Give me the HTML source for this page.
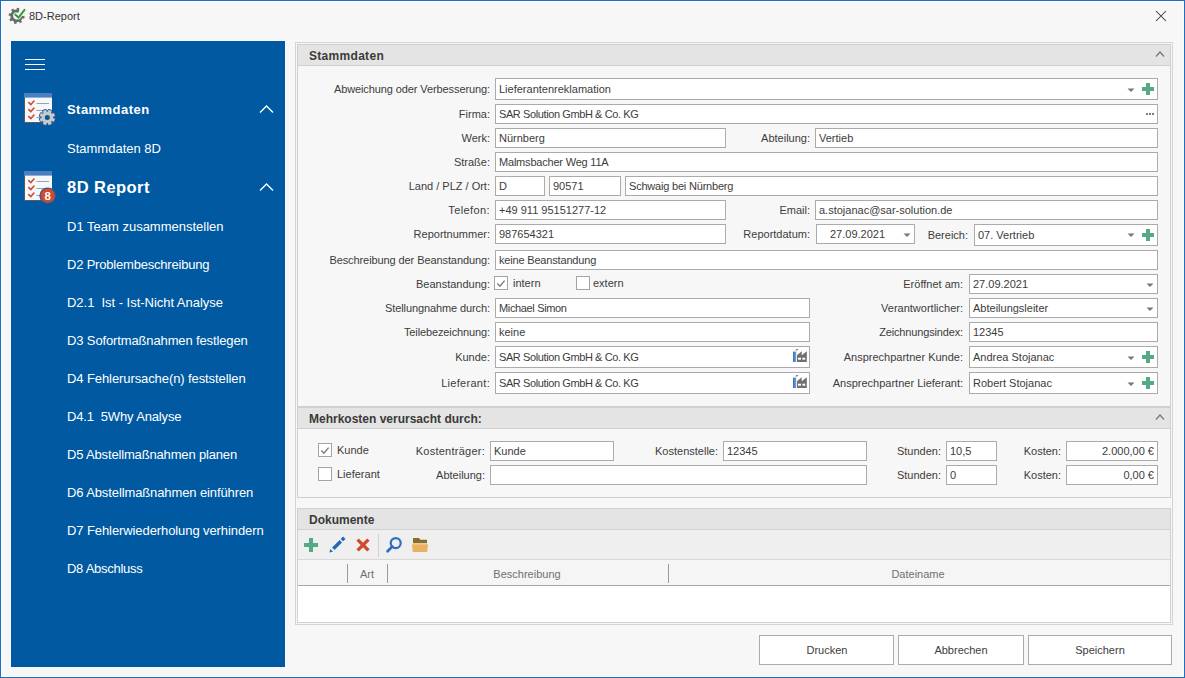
<!DOCTYPE html>
<html><head><meta charset="utf-8"><title>8D-Report</title>
<style>
html,body{margin:0;padding:0;width:1185px;height:678px;overflow:hidden;background:#f7f7f7;}
body{position:relative;font-family:"Liberation Sans", sans-serif;}
.t{position:absolute;white-space:nowrap;line-height:20px;height:20px;}
.b{position:absolute;box-sizing:border-box;}
.r{position:absolute;display:block;}
</style></head><body>
<div class="r" style="left:0;top:0;width:1183px;height:676px;border:1px solid #1a6fc4;background:#f7f7f7;"></div>
<div class="r" style="left:1px;top:1px;width:1183px;height:1px;background:#fdfdfd;"></div>
<div class="r" style="left:1px;top:1px;width:1px;height:676px;background:#fdfdfd;"></div>
<div class="r" style="left:1183px;top:1px;width:1px;height:676px;background:#fdfdfd;"></div>
<div class="r" style="left:1px;top:676px;width:1183px;height:1px;background:#fdfdfd;"></div>
<svg class="r" style="left:0px;top:0px;" width="30" height="30" viewBox="0 0 30 30">
<g transform="translate(16.6 15.9)" fill="#6a6a6a">
<circle r="4.9" fill="none" stroke="#6a6a6a" stroke-width="2.8" stroke-dasharray="24.4 6.4" transform="rotate(5)"/>
<rect x="-1.25" y="-8.0" width="2.5" height="3.4" transform="rotate(11)"/><rect x="-1.25" y="-8.0" width="2.5" height="3.4" transform="rotate(101)"/><rect x="-1.25" y="-8.0" width="2.5" height="3.4" transform="rotate(146)"/><rect x="-1.25" y="-8.0" width="2.5" height="3.4" transform="rotate(191)"/><rect x="-1.25" y="-8.0" width="2.5" height="3.4" transform="rotate(236)"/><rect x="-1.25" y="-8.0" width="2.5" height="3.4" transform="rotate(281)"/><rect x="-1.25" y="-8.0" width="2.5" height="3.4" transform="rotate(326)"/>
</g>
<path d="M15.2 14.5 L18.5 17.6 L24.5 9.8" fill="none" stroke="#f7f7f7" stroke-width="3.6" stroke-linecap="round" stroke-linejoin="round"/>
<path d="M15.2 14.5 L18.5 17.6 L24.5 9.8" fill="none" stroke="#2ba12e" stroke-width="2.0" stroke-linecap="round" stroke-linejoin="round"/>
</svg>
<div class="t" style="top:6px;font-size:11px;color:#333;left:29px;">8D-Report</div>
<svg class="r" style="left:1155px;top:10px;" width="12" height="12" viewBox="0 0 12 12"><path d="M1 1 L11 11 M11 1 L1 11" stroke="#3a3a3a" stroke-width="1.05"/></svg>
<div class="r" style="left:11px;top:41px;width:274px;height:626px;background:#0059a1;"></div>
<div class="r" style="left:25px;top:59px;width:20px;height:1px;background:#ffffff;"></div>
<div class="r" style="left:25px;top:64px;width:20px;height:1px;background:#ffffff;"></div>
<div class="r" style="left:25px;top:69px;width:20px;height:1px;background:#ffffff;"></div>
<svg class="r" style="left:24px;top:93px;" width="30" height="30" viewBox="0 0 30 30">
<rect x="0" y="0" width="28" height="30" fill="#5a5a5a"/>
<rect x="1" y="0" width="27" height="29" fill="#f6f7fa"/>
<rect x="0" y="0" width="28" height="4.6" fill="#4a80c0"/>
<g fill="none" stroke="#d14a2c" stroke-width="1.6" stroke-linecap="round" stroke-linejoin="round">
<path d="M4.8 9.6 L6.9 11.6 L10 8"/>
<path d="M4.8 16.6 L6.9 18.6 L10 15"/>
<path d="M4.8 23.6 L6.9 25.6 L10 22"/>
</g>
<g fill="#a0a0a0">
<rect x="12.5" y="10" width="12.5" height="1"/>
<rect x="12.5" y="17" width="12.5" height="1"/>
<rect x="12.5" y="24" width="12.5" height="1"/>
</g></svg>
<svg class="r" style="left:38px;top:108px;" width="19" height="19" viewBox="0 0 19 19">
<g transform="translate(9.3 9.4)">
<g fill="#1d5c9f"><circle r="6.6"/><rect x="-2.5" y="-8.5" width="5" height="4.6" rx="1.2" transform="rotate(22.5)"/><rect x="-2.5" y="-8.5" width="5" height="4.6" rx="1.2" transform="rotate(67.5)"/><rect x="-2.5" y="-8.5" width="5" height="4.6" rx="1.2" transform="rotate(112.5)"/><rect x="-2.5" y="-8.5" width="5" height="4.6" rx="1.2" transform="rotate(157.5)"/><rect x="-2.5" y="-8.5" width="5" height="4.6" rx="1.2" transform="rotate(202.5)"/><rect x="-2.5" y="-8.5" width="5" height="4.6" rx="1.2" transform="rotate(247.5)"/><rect x="-2.5" y="-8.5" width="5" height="4.6" rx="1.2" transform="rotate(292.5)"/><rect x="-2.5" y="-8.5" width="5" height="4.6" rx="1.2" transform="rotate(337.5)"/></g>
<g fill="#c9c9c9"><circle r="5.7"/><rect x="-1.7" y="-7.7" width="3.4" height="3.6" rx="0.8" transform="rotate(22.5)"/><rect x="-1.7" y="-7.7" width="3.4" height="3.6" rx="0.8" transform="rotate(67.5)"/><rect x="-1.7" y="-7.7" width="3.4" height="3.6" rx="0.8" transform="rotate(112.5)"/><rect x="-1.7" y="-7.7" width="3.4" height="3.6" rx="0.8" transform="rotate(157.5)"/><rect x="-1.7" y="-7.7" width="3.4" height="3.6" rx="0.8" transform="rotate(202.5)"/><rect x="-1.7" y="-7.7" width="3.4" height="3.6" rx="0.8" transform="rotate(247.5)"/><rect x="-1.7" y="-7.7" width="3.4" height="3.6" rx="0.8" transform="rotate(292.5)"/><rect x="-1.7" y="-7.7" width="3.4" height="3.6" rx="0.8" transform="rotate(337.5)"/></g>
<circle r="2.5" fill="#0059a1"/>
</g></svg>
<svg class="r" style="left:24px;top:171px;" width="30" height="30" viewBox="0 0 30 30">
<rect x="0" y="0" width="28" height="30" fill="#5a5a5a"/>
<rect x="1" y="0" width="27" height="29" fill="#f6f7fa"/>
<rect x="0" y="0" width="28" height="4.6" fill="#4a80c0"/>
<g fill="none" stroke="#d14a2c" stroke-width="1.6" stroke-linecap="round" stroke-linejoin="round">
<path d="M4.8 9.6 L6.9 11.6 L10 8"/>
<path d="M4.8 16.6 L6.9 18.6 L10 15"/>
<path d="M4.8 23.6 L6.9 25.6 L10 22"/>
</g>
<g fill="#a0a0a0">
<rect x="12.5" y="10" width="12.5" height="1"/>
<rect x="12.5" y="17" width="12.5" height="1"/>
<rect x="12.5" y="24" width="12.5" height="1"/>
</g></svg>
<svg class="r" style="left:38px;top:186px;" width="19" height="19" viewBox="0 0 19 19">
<circle cx="9.7" cy="9.7" r="8.3" fill="#1d5c9f"/>
<circle cx="9.7" cy="9.7" r="7.2" fill="#d04a2c"/>
<text x="9.8" y="13.8" font-family="Liberation Sans" font-weight="bold" font-size="11.5" fill="#fff" text-anchor="middle">8</text></svg>
<div class="t" style="top:100px;font-size:13px;color:#fff;font-weight:bold;letter-spacing:0.45px;left:67px;">Stammdaten</div>
<svg class="r" style="left:259px;top:105px;" width="15" height="9" viewBox="0 0 15 9"><path d="M1 7.5 L7.5 1 L14 7.5" fill="none" stroke="#fff" stroke-width="1.4"/></svg>
<div class="t" style="top:139px;font-size:13px;color:#fff;left:67px;">Stammdaten 8D</div>
<div class="t" style="top:177px;font-size:16.5px;color:#fff;font-weight:bold;letter-spacing:0.45px;left:67px;">8D Report</div>
<svg class="r" style="left:259px;top:183px;" width="15" height="9" viewBox="0 0 15 9"><path d="M1 7.5 L7.5 1 L14 7.5" fill="none" stroke="#fff" stroke-width="1.4"/></svg>
<div class="t" style="top:217px;font-size:13px;color:#fff;letter-spacing:0px;left:67px;">D1 Team zusammenstellen</div>
<div class="t" style="top:255px;font-size:13px;color:#fff;letter-spacing:-0.2px;left:67px;">D2 Problembeschreibung</div>
<div class="t" style="top:293px;font-size:13px;color:#fff;letter-spacing:-0.03px;left:67px;">D2.1&nbsp;&nbsp;Ist - Ist-Nicht Analyse</div>
<div class="t" style="top:331px;font-size:13px;color:#fff;letter-spacing:-0.13px;left:67px;">D3 Sofortmaßnahmen festlegen</div>
<div class="t" style="top:369px;font-size:13px;color:#fff;letter-spacing:-0.09px;left:67px;">D4 Fehlerursache(n) feststellen</div>
<div class="t" style="top:407px;font-size:13px;color:#fff;letter-spacing:-0.15px;left:67px;">D4.1&nbsp;&nbsp;5Why Analyse</div>
<div class="t" style="top:445px;font-size:13px;color:#fff;letter-spacing:-0.16px;left:67px;">D5 Abstellmaßnahmen planen</div>
<div class="t" style="top:483px;font-size:13px;color:#fff;letter-spacing:-0.11px;left:67px;">D6 Abstellmaßnahmen einführen</div>
<div class="t" style="top:521px;font-size:13px;color:#fff;letter-spacing:-0.09px;left:67px;">D7 Fehlerwiederholung verhindern</div>
<div class="t" style="top:559px;font-size:13px;color:#fff;letter-spacing:-0.28px;left:67px;">D8 Abschluss</div>
<div class="b" style="left:295px;top:42px;width:878px;height:583px;background:#f7f7f7;border:1px solid #d4d4d4;"></div>
<div class="b" style="left:297px;top:44px;width:874px;height:363px;background:#f7f7f7;border:1px solid #d0d0d0;"></div>
<div class="r" style="left:298px;top:45px;width:872px;height:20px;background:#e4e4e4;"></div>
<div class="r" style="left:298px;top:65px;width:872px;height:1px;background:#d0d0d0;"></div>
<div class="t" style="top:46px;font-size:12px;color:#3a3a3a;font-weight:bold;letter-spacing:0.3px;left:309px;">Stammdaten</div>
<svg class="r" style="left:1155px;top:51px;" width="10" height="7" viewBox="0 0 10 7"><path d="M1 5.5 L5.0 1 L9 5.5" fill="none" stroke="#777" stroke-width="1.2"/></svg>
<div class="b" style="left:297px;top:407px;width:874px;height:91px;background:#f7f7f7;border:1px solid #d0d0d0;"></div>
<div class="r" style="left:298px;top:408px;width:872px;height:20px;background:#e4e4e4;"></div>
<div class="r" style="left:298px;top:428px;width:872px;height:1px;background:#d0d0d0;"></div>
<div class="t" style="top:409px;font-size:12px;color:#3a3a3a;font-weight:bold;left:309px;">Mehrkosten verursacht durch:</div>
<svg class="r" style="left:1155px;top:414px;" width="10" height="7" viewBox="0 0 10 7"><path d="M1 5.5 L5.0 1 L9 5.5" fill="none" stroke="#777" stroke-width="1.2"/></svg>
<div class="b" style="left:297px;top:508px;width:874px;height:115px;background:#ffffff;border:1px solid #d0d0d0;"></div>
<div class="r" style="left:298px;top:509px;width:872px;height:20px;background:#e4e4e4;"></div>
<div class="r" style="left:298px;top:529px;width:872px;height:1px;background:#d0d0d0;"></div>
<div class="t" style="top:510px;font-size:12px;color:#3a3a3a;font-weight:bold;left:309px;">Dokumente</div>
<div class="r" style="left:298px;top:530px;width:872px;height:29px;background:#efefef;"></div>
<div class="r" style="left:298px;top:559px;width:872px;height:1px;background:#d8d8d8;"></div>
<div class="r" style="left:298px;top:560px;width:872px;height:25px;background:#f5f5f5;"></div>
<div class="r" style="left:298px;top:585px;width:872px;height:1px;background:#a8a8a8;"></div>
<div class="t" style="top:79px;font-size:11px;color:#3c3c3c;right:695px;text-align:right;"><span style="letter-spacing:-0.1px">Abweichung oder Verbesserung:</span></div>
<div class="b" style="left:495px;top:78px;width:663px;height:22px;background:#fff;border:1px solid #ababab;"></div>
<div class="t" style="top:79px;font-size:11px;color:#3c3c3c;left:499px;">Lieferantenreklamation</div>
<svg class="r" style="left:1127px;top:88px;" width="8" height="5" viewBox="0 0 8 5"><path d="M0.5 0.5 L7.5 0.5 L4 4 Z" fill="#777"/></svg>
<div class="r" style="left:1146px;top:83px;width:4px;height:12px;background:#55a985;"></div>
<div class="r" style="left:1142px;top:87px;width:12px;height:4px;background:#55a985;"></div>
<div class="t" style="top:104px;font-size:11px;color:#3c3c3c;right:695px;text-align:right;">Firma:</div>
<div class="b" style="left:495px;top:104px;width:663px;height:20px;background:#fff;border:1px solid #ababab;"></div>
<div class="t" style="top:104px;font-size:11px;color:#3c3c3c;left:499px;"><span style="letter-spacing:-0.4px">SAR Solution GmbH &amp; Co. KG</span></div>
<div class="r" style="left:1146px;top:113px;width:2px;height:2px;background:#7c7c7c;"></div>
<div class="r" style="left:1149px;top:113px;width:2px;height:2px;background:#7c7c7c;"></div>
<div class="r" style="left:1152px;top:113px;width:2px;height:2px;background:#7c7c7c;"></div>
<div class="t" style="top:128px;font-size:11px;color:#3c3c3c;right:695px;text-align:right;">Werk:</div>
<div class="b" style="left:495px;top:128px;width:231px;height:20px;background:#fff;border:1px solid #ababab;"></div>
<div class="t" style="top:128px;font-size:11px;color:#3c3c3c;left:499px;">Nürnberg</div>
<div class="t" style="top:128px;font-size:11px;color:#3c3c3c;right:375px;text-align:right;">Abteilung:</div>
<div class="b" style="left:815px;top:128px;width:343px;height:20px;background:#fff;border:1px solid #ababab;"></div>
<div class="t" style="top:128px;font-size:11px;color:#3c3c3c;left:819px;">Vertieb</div>
<div class="t" style="top:152px;font-size:11px;color:#3c3c3c;right:695px;text-align:right;">Straße:</div>
<div class="b" style="left:495px;top:152px;width:663px;height:20px;background:#fff;border:1px solid #ababab;"></div>
<div class="t" style="top:152px;font-size:11px;color:#3c3c3c;left:499px;"><span style="letter-spacing:-0.2px">Malmsbacher Weg 11A</span></div>
<div class="t" style="top:176px;font-size:11px;color:#3c3c3c;right:695px;text-align:right;">Land / PLZ / Ort:</div>
<div class="b" style="left:495px;top:176px;width:50px;height:20px;background:#fff;border:1px solid #ababab;"></div>
<div class="t" style="top:176px;font-size:11px;color:#3c3c3c;left:499px;">D</div>
<div class="b" style="left:549px;top:176px;width:72px;height:20px;background:#fff;border:1px solid #ababab;"></div>
<div class="t" style="top:176px;font-size:11px;color:#3c3c3c;left:553px;">90571</div>
<div class="b" style="left:625px;top:176px;width:533px;height:20px;background:#fff;border:1px solid #ababab;"></div>
<div class="t" style="top:176px;font-size:11px;color:#3c3c3c;left:629px;"><span style="letter-spacing:-0.2px">Schwaig bei Nürnberg</span></div>
<div class="t" style="top:200px;font-size:11px;color:#3c3c3c;right:695px;text-align:right;"><span style="letter-spacing:0.4px">Telefon:</span></div>
<div class="b" style="left:495px;top:200px;width:231px;height:20px;background:#fff;border:1px solid #ababab;"></div>
<div class="t" style="top:200px;font-size:11px;color:#3c3c3c;left:499px;">+49 911 95151277-12</div>
<div class="t" style="top:200px;font-size:11px;color:#3c3c3c;right:375px;text-align:right;">Email:</div>
<div class="b" style="left:815px;top:200px;width:343px;height:20px;background:#fff;border:1px solid #ababab;"></div>
<div class="t" style="top:200px;font-size:11px;color:#3c3c3c;left:819px;">a.stojanac@sar-solution.de</div>
<div class="t" style="top:224px;font-size:11px;color:#3c3c3c;right:695px;text-align:right;">Reportnummer:</div>
<div class="b" style="left:495px;top:224px;width:231px;height:20px;background:#fff;border:1px solid #ababab;"></div>
<div class="t" style="top:224px;font-size:11px;color:#3c3c3c;left:499px;">987654321</div>
<div class="t" style="top:224px;font-size:11px;color:#3c3c3c;right:375px;text-align:right;">Reportdatum:</div>
<div class="b" style="left:816px;top:224px;width:99px;height:20px;background:#fff;border:1px solid #ababab;"></div>
<div class="t" style="top:224px;font-size:11px;color:#3c3c3c;left:830px;">27.09.2021</div>
<svg class="r" style="left:903px;top:233px;" width="8" height="5" viewBox="0 0 8 5"><path d="M0.5 0.5 L7.5 0.5 L4 4 Z" fill="#777"/></svg>
<div class="t" style="top:225px;font-size:11px;color:#3c3c3c;right:217px;text-align:right;">Bereich:</div>
<div class="b" style="left:974px;top:224px;width:184px;height:22px;background:#fff;border:1px solid #ababab;"></div>
<div class="t" style="top:225px;font-size:11px;color:#3c3c3c;left:978px;">07. Vertrieb</div>
<svg class="r" style="left:1127px;top:233px;" width="8" height="5" viewBox="0 0 8 5"><path d="M0.5 0.5 L7.5 0.5 L4 4 Z" fill="#777"/></svg>
<div class="r" style="left:1146px;top:229px;width:4px;height:12px;background:#55a985;"></div>
<div class="r" style="left:1142px;top:233px;width:12px;height:4px;background:#55a985;"></div>
<div class="t" style="top:250px;font-size:11px;color:#3c3c3c;right:695px;text-align:right;"><span style="letter-spacing:-0.09px">Beschreibung der Beanstandung:</span></div>
<div class="b" style="left:495px;top:250px;width:663px;height:20px;background:#fff;border:1px solid #ababab;"></div>
<div class="t" style="top:250px;font-size:11px;color:#3c3c3c;left:499px;"><span style="letter-spacing:-0.18px">keine Beanstandung</span></div>
<div class="t" style="top:274px;font-size:11px;color:#3c3c3c;right:695px;text-align:right;">Beanstandung:</div>
<div class="b" style="left:494px;top:276px;width:14px;height:14px;background:#fff;border:1px solid #a4a4a4;"></div>
<svg class="r" style="left:496px;top:278px;" width="10" height="10" viewBox="0 0 10 10"><path d="M1.3 5.6 L3.9 8.2 L8.6 2.6" fill="none" stroke="#7a7a7a" stroke-width="1.4"/></svg>
<div class="t" style="top:273px;font-size:11px;color:#3c3c3c;left:513px;">intern</div>
<div class="b" style="left:576px;top:276px;width:14px;height:14px;background:#fff;border:1px solid #a4a4a4;"></div>
<div class="t" style="top:273px;font-size:11px;color:#3c3c3c;left:593px;">extern</div>
<div class="t" style="top:274px;font-size:11px;color:#3c3c3c;right:222px;text-align:right;">Eröffnet am:</div>
<div class="b" style="left:969px;top:274px;width:189px;height:20px;background:#fff;border:1px solid #ababab;"></div>
<div class="t" style="top:274px;font-size:11px;color:#3c3c3c;left:973px;">27.09.2021</div>
<svg class="r" style="left:1146px;top:283px;" width="8" height="5" viewBox="0 0 8 5"><path d="M0.5 0.5 L7.5 0.5 L4 4 Z" fill="#777"/></svg>
<div class="t" style="top:298px;font-size:11px;color:#3c3c3c;right:695px;text-align:right;"><span style="letter-spacing:-0.1px">Stellungnahme durch:</span></div>
<div class="b" style="left:495px;top:298px;width:315px;height:20px;background:#fff;border:1px solid #ababab;"></div>
<div class="t" style="top:298px;font-size:11px;color:#3c3c3c;left:499px;"><span style="letter-spacing:-0.35px">Michael Simon</span></div>
<div class="t" style="top:298px;font-size:11px;color:#3c3c3c;right:222px;text-align:right;">Verantwortlicher:</div>
<div class="b" style="left:969px;top:298px;width:189px;height:20px;background:#fff;border:1px solid #ababab;"></div>
<div class="t" style="top:298px;font-size:11px;color:#3c3c3c;left:973px;">Abteilungsleiter</div>
<svg class="r" style="left:1146px;top:307px;" width="8" height="5" viewBox="0 0 8 5"><path d="M0.5 0.5 L7.5 0.5 L4 4 Z" fill="#777"/></svg>
<div class="t" style="top:322px;font-size:11px;color:#3c3c3c;right:695px;text-align:right;"><span style="letter-spacing:-0.12px">Teilebezeichnung:</span></div>
<div class="b" style="left:495px;top:322px;width:315px;height:20px;background:#fff;border:1px solid #ababab;"></div>
<div class="t" style="top:322px;font-size:11px;color:#3c3c3c;left:499px;">keine</div>
<div class="t" style="top:322px;font-size:11px;color:#3c3c3c;right:222px;text-align:right;"><span style="letter-spacing:-0.15px">Zeichnungsindex:</span></div>
<div class="b" style="left:969px;top:322px;width:189px;height:20px;background:#fff;border:1px solid #ababab;"></div>
<div class="t" style="top:322px;font-size:11px;color:#3c3c3c;left:973px;">12345</div>
<div class="t" style="top:347px;font-size:11px;color:#3c3c3c;right:695px;text-align:right;">Kunde:</div>
<div class="b" style="left:495px;top:346px;width:315px;height:22px;background:#fff;border:1px solid #ababab;"></div>
<div class="t" style="top:347px;font-size:11px;color:#3c3c3c;left:499px;"><span style="letter-spacing:-0.4px">SAR Solution GmbH &amp; Co. KG</span></div>
<svg class="r" style="left:793px;top:349px;" width="15" height="14" viewBox="0 0 15 14"><defs><linearGradient id="fg" x1="0" x2="1"><stop offset="0" stop-color="#2f6db8"/><stop offset="1" stop-color="#7fa8d8"/></linearGradient></defs><path d="M2 1.6 L3.6 0 L5.6 0 L4 1.6 Z" fill="#7a7a7a"/><rect x="0" y="2.6" width="3.2" height="10.4" fill="url(#fg)"/><path d="M4 13 L4 6.2 L8.7 2.3 L8.7 6.2 L13.8 2.3 L13.8 13 Z" fill="#707070"/><rect x="5" y="8.7" width="3" height="2" fill="#fff"/><rect x="9.4" y="8.7" width="2.8" height="2" fill="#fff"/></svg>
<div class="t" style="top:347px;font-size:11px;color:#3c3c3c;right:222px;text-align:right;">Ansprechpartner Kunde:</div>
<div class="b" style="left:969px;top:346px;width:189px;height:22px;background:#fff;border:1px solid #ababab;"></div>
<div class="t" style="top:347px;font-size:11px;color:#3c3c3c;left:973px;">Andrea Stojanac</div>
<svg class="r" style="left:1127px;top:356px;" width="8" height="5" viewBox="0 0 8 5"><path d="M0.5 0.5 L7.5 0.5 L4 4 Z" fill="#777"/></svg>
<div class="r" style="left:1146px;top:351px;width:4px;height:12px;background:#55a985;"></div>
<div class="r" style="left:1142px;top:355px;width:12px;height:4px;background:#55a985;"></div>
<div class="t" style="top:373px;font-size:11px;color:#3c3c3c;right:695px;text-align:right;"><span style="letter-spacing:0.3px">Lieferant:</span></div>
<div class="b" style="left:495px;top:372px;width:315px;height:22px;background:#fff;border:1px solid #ababab;"></div>
<div class="t" style="top:373px;font-size:11px;color:#3c3c3c;left:499px;"><span style="letter-spacing:-0.4px">SAR Solution GmbH &amp; Co. KG</span></div>
<svg class="r" style="left:793px;top:375px;" width="15" height="14" viewBox="0 0 15 14"><defs><linearGradient id="fg" x1="0" x2="1"><stop offset="0" stop-color="#2f6db8"/><stop offset="1" stop-color="#7fa8d8"/></linearGradient></defs><path d="M2 1.6 L3.6 0 L5.6 0 L4 1.6 Z" fill="#7a7a7a"/><rect x="0" y="2.6" width="3.2" height="10.4" fill="url(#fg)"/><path d="M4 13 L4 6.2 L8.7 2.3 L8.7 6.2 L13.8 2.3 L13.8 13 Z" fill="#707070"/><rect x="5" y="8.7" width="3" height="2" fill="#fff"/><rect x="9.4" y="8.7" width="2.8" height="2" fill="#fff"/></svg>
<div class="t" style="top:373px;font-size:11px;color:#3c3c3c;right:222px;text-align:right;">Ansprechpartner Lieferant:</div>
<div class="b" style="left:969px;top:372px;width:189px;height:22px;background:#fff;border:1px solid #ababab;"></div>
<div class="t" style="top:373px;font-size:11px;color:#3c3c3c;left:973px;">Robert Stojanac</div>
<svg class="r" style="left:1127px;top:382px;" width="8" height="5" viewBox="0 0 8 5"><path d="M0.5 0.5 L7.5 0.5 L4 4 Z" fill="#777"/></svg>
<div class="r" style="left:1146px;top:377px;width:4px;height:12px;background:#55a985;"></div>
<div class="r" style="left:1142px;top:381px;width:12px;height:4px;background:#55a985;"></div>
<div class="b" style="left:318px;top:443px;width:14px;height:14px;background:#fff;border:1px solid #a4a4a4;"></div>
<svg class="r" style="left:320px;top:445px;" width="10" height="10" viewBox="0 0 10 10"><path d="M1.3 5.6 L3.9 8.2 L8.6 2.6" fill="none" stroke="#7a7a7a" stroke-width="1.4"/></svg>
<div class="t" style="top:440px;font-size:11px;color:#3c3c3c;left:337px;">Kunde</div>
<div class="b" style="left:318px;top:467px;width:14px;height:14px;background:#fff;border:1px solid #a4a4a4;"></div>
<div class="t" style="top:464px;font-size:11px;color:#3c3c3c;left:337px;">Lieferant</div>
<div class="t" style="top:441px;font-size:11px;color:#3c3c3c;right:700px;text-align:right;"><span style="letter-spacing:0.25px">Kostenträger:</span></div>
<div class="b" style="left:490px;top:441px;width:124px;height:20px;background:#fff;border:1px solid #ababab;"></div>
<div class="t" style="top:441px;font-size:11px;color:#3c3c3c;left:494px;">Kunde</div>
<div class="t" style="top:441px;font-size:11px;color:#3c3c3c;right:467px;text-align:right;">Kostenstelle:</div>
<div class="b" style="left:723px;top:441px;width:144px;height:20px;background:#fff;border:1px solid #ababab;"></div>
<div class="t" style="top:441px;font-size:11px;color:#3c3c3c;left:727px;">12345</div>
<div class="t" style="top:441px;font-size:11px;color:#3c3c3c;right:244px;text-align:right;">Stunden:</div>
<div class="b" style="left:946px;top:441px;width:51px;height:20px;background:#fff;border:1px solid #ababab;"></div>
<div class="t" style="top:441px;font-size:11px;color:#3c3c3c;left:950px;">10,5</div>
<div class="t" style="top:441px;font-size:11px;color:#3c3c3c;right:124px;text-align:right;">Kosten:</div>
<div class="b" style="left:1066px;top:441px;width:92px;height:20px;background:#fff;border:1px solid #ababab;"></div>
<div class="t" style="top:441px;font-size:11px;color:#3c3c3c;right:31px;text-align:right;">2.000,00 €</div>
<div class="t" style="top:465px;font-size:11px;color:#3c3c3c;right:700px;text-align:right;">Abteilung:</div>
<div class="b" style="left:490px;top:465px;width:377px;height:20px;background:#fff;border:1px solid #ababab;"></div>
<div class="t" style="top:465px;font-size:11px;color:#3c3c3c;right:244px;text-align:right;">Stunden:</div>
<div class="b" style="left:946px;top:465px;width:51px;height:20px;background:#fff;border:1px solid #ababab;"></div>
<div class="t" style="top:465px;font-size:11px;color:#3c3c3c;left:950px;">0</div>
<div class="t" style="top:465px;font-size:11px;color:#3c3c3c;right:124px;text-align:right;">Kosten:</div>
<div class="b" style="left:1066px;top:465px;width:92px;height:20px;background:#fff;border:1px solid #ababab;"></div>
<div class="t" style="top:465px;font-size:11px;color:#3c3c3c;right:31px;text-align:right;">0,00 €</div>
<div class="r" style="left:309px;top:538px;width:4px;height:14px;background:#55a985;"></div>
<div class="r" style="left:304px;top:543px;width:14px;height:4px;background:#55a985;"></div>
<svg class="r" style="left:328px;top:536px;" width="18" height="18" viewBox="0 0 18 18"><path d="M5.3 12.7 L12.8 5.2" stroke="#1f68b8" stroke-width="3.4"/><path d="M13.9 4.1 L16.3 1.7" stroke="#1f68b8" stroke-width="3.4"/><path d="M1.5 16.5 L2.2 13.0 L5.0 15.8 Z" fill="#1f68b8"/></svg>
<svg class="r" style="left:356px;top:538px;" width="14" height="15" viewBox="0 0 14 15"><path d="M1.6 1.6 L12.4 12.4 M12.4 1.6 L1.6 12.4" stroke="#d04a2c" stroke-width="3.4"/></svg>
<div class="r" style="left:378px;top:534px;width:1px;height:23px;background:#d0d0d0;"></div>
<svg class="r" style="left:386px;top:537px;" width="17" height="17" viewBox="0 0 17 17"><circle cx="9.7" cy="6.1" r="5.0" fill="none" stroke="#2f6fb9" stroke-width="2.2"/><path d="M6.3 9.5 L1.6 14.2" stroke="#2f6fb9" stroke-width="2.7" stroke-linecap="round"/></svg>
<svg class="r" style="left:412px;top:538px;" width="17" height="15" viewBox="0 0 17 15"><path d="M1 0 L7 0 L8.3 1.7 L15 1.7 L15 5.2 L1 5.2 Z" fill="#8f6c25"/><path d="M0 6.2 L16 6.2 L15.2 14 L0.8 14 Z" fill="#e8b262"/></svg>
<div class="r" style="left:347px;top:564px;width:1px;height:19px;background:#9a9a9a;"></div>
<div class="r" style="left:387px;top:564px;width:1px;height:19px;background:#9a9a9a;"></div>
<div class="r" style="left:668px;top:564px;width:1px;height:19px;background:#9a9a9a;"></div>
<div class="t" style="top:564px;font-size:11px;color:#707070;left:217px;width:300px;text-align:center;">Art</div>
<div class="t" style="top:564px;font-size:11px;color:#707070;left:377px;width:300px;text-align:center;">Beschreibung</div>
<div class="t" style="top:564px;font-size:11px;color:#707070;left:768px;width:300px;text-align:center;">Dateiname</div>
<div class="b" style="left:759px;top:635px;width:135px;height:30px;background:#fff;border:1px solid #ababab;"></div>
<div class="t" style="top:640px;font-size:11px;color:#3c3c3c;left:677px;width:300px;text-align:center;">Drucken</div>
<div class="b" style="left:898px;top:635px;width:126px;height:30px;background:#fff;border:1px solid #ababab;"></div>
<div class="t" style="top:640px;font-size:11px;color:#3c3c3c;left:811px;width:300px;text-align:center;">Abbrechen</div>
<div class="b" style="left:1028px;top:635px;width:144px;height:30px;background:#fff;border:1px solid #ababab;"></div>
<div class="t" style="top:640px;font-size:11px;color:#3c3c3c;left:950px;width:300px;text-align:center;">Speichern</div>
</body></html>
